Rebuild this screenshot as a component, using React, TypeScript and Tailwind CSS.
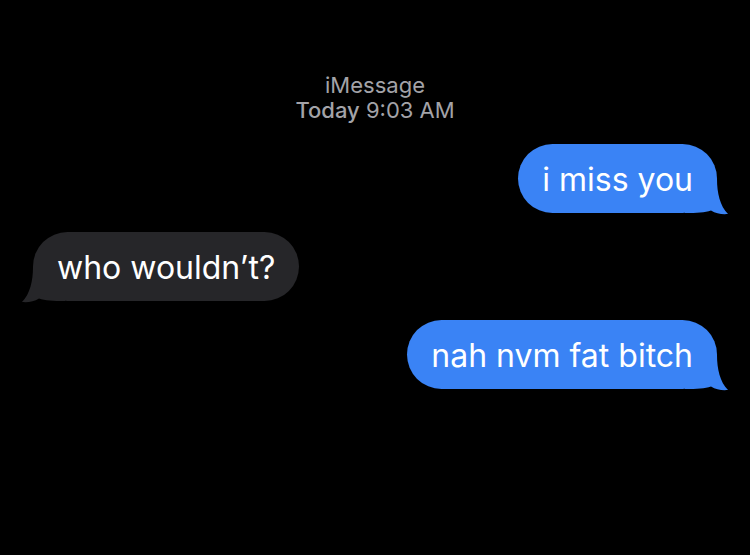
import React from 'react';

type Msg = { text: string; fromMe: boolean };

const messages: Msg[] = [
  { text: 'i miss you', fromMe: true },
  { text: 'who wouldn’t?', fromMe: false },
  { text: 'nah nvm fat bitch', fromMe: true },
];

function Tail({ color, flip }: { color: string; flip?: boolean }) {
  return (
    <svg
      width="44"
      height="36"
      viewBox="0 0 44 36"
      className={flip ? 'absolute bottom-[-2px] left-[-12px] -scale-x-100' : 'absolute bottom-[-2px] right-[-12px]'}
    >
      <path
        d="M0 0 L32 0 C32 14 35 27 43 35 C37 35.6 31 34.6 26 31.5 C20 33.6 12 34 0 34 Z"
        fill={color}
      />
    </svg>
  );
}

function Bubble({ text, fromMe }: Msg) {
  const color = fromMe ? '#3a83f5' : '#262629';
  return (
    <div className={fromMe ? 'flex justify-end pr-[33px]' : 'flex justify-start pl-[33px]'}>
      <div
        className={
          'relative flex h-[69px] items-center rounded-[35px] px-[24px] pt-[3px] text-[32px] text-white ' +
          (fromMe ? 'bg-[#3a83f5]' : 'bg-[#262629]')
        }
      >
        <Tail color={color} flip={!fromMe} />
        <span className="relative">{text}</span>
      </div>
    </div>
  );
}

export default function App() {
  return (
    <div className="h-[555px] w-full overflow-hidden bg-black font-['Inter','Noto_Sans',sans-serif]">
      <div className="pt-[73px] text-center text-[22px] leading-[25px] text-[#a3a3a8]">
        <div>iMessage</div>
        <div>
          <span className="font-medium">Today</span> 9:03 AM
        </div>
      </div>
      <div className="mt-[21px] flex flex-col gap-[19px]">
        {messages.map((m, i) => (
          <Bubble key={i} {...m} />
        ))}
      </div>
    </div>
  );
}
